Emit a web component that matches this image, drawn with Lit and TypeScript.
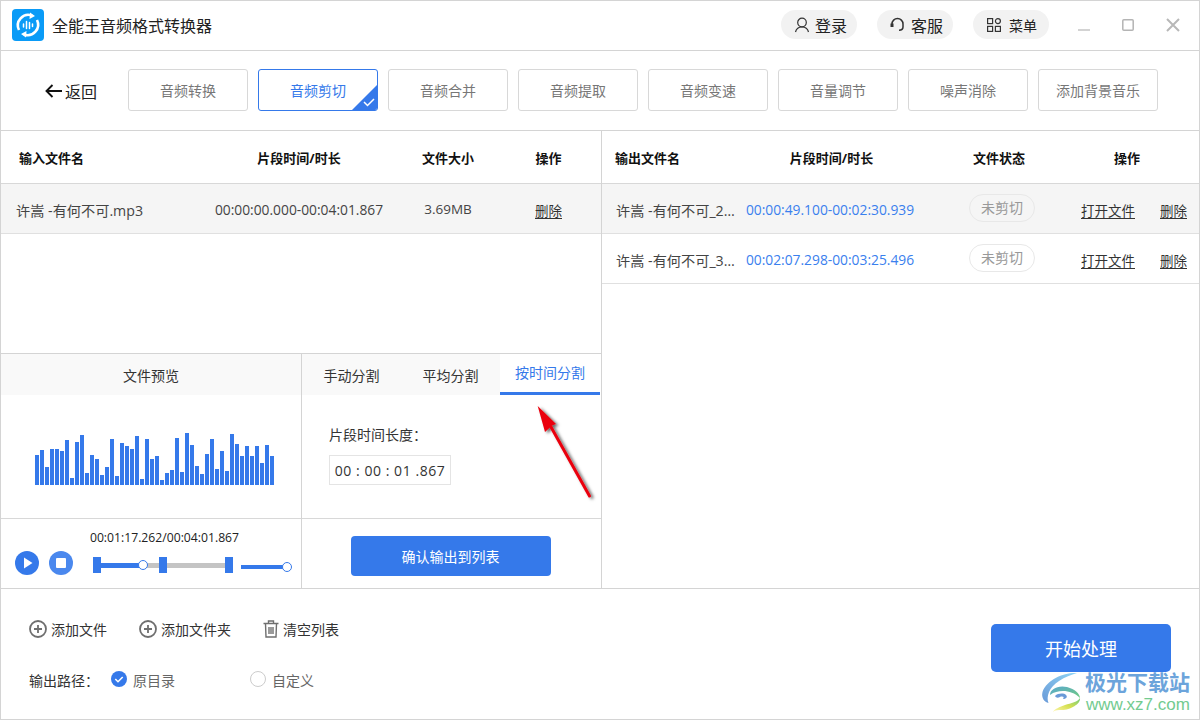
import { LitElement, html, css } from "lit";
import { customElement } from "lit/decorators.js";

const TOPS = [315,300,351,297,297,303,270,384,276,255,369,315,327,375,351,267,378,279,288,297,258,387,267,327,318,390,369,360,264,366,249,285,348,372,312,267,357,303,363,252,282,318,288,318,288,339,285,318];
const TABS = ["音频转换","音频剪切","音频合并","音频提取","音频变速","音量调节","噪声消除","添加背景音乐"];

const plus = html`<svg class="ic" width="18" height="18" viewBox="0 0 18 18" fill="none" stroke="#6f6f6f" stroke-width="1.8"><circle cx="9" cy="9" r="8"/><path d="M5 9h8M9 5v8"/></svg>`;

@customElement("app-root")
export class AppRoot extends LitElement {
  static styles = css`
    :host { display: block; width: 1200px; height: 720px; font-family: "Open Sans", "Noto Sans CJK SC", sans-serif; color: #333; font-size: 14px; }
    * { box-sizing: border-box; }
    .app { position: relative; width: 1200px; height: 720px; border: 1px solid #d4d4d4; background: #fff; display: flex; flex-direction: column; overflow: hidden; }
    .titlebar { height: 50px; flex: none; border-bottom: 1px solid #d4d4d4; display: flex; align-items: center; padding: 0 19px 2px 11px; }
    .logo { width: 32px; height: 32px; flex: none; }
    .title { margin-left: 8px; font-size: 16px; color: #222; flex: 1; }
    .pill { width: 76px; height: 29px; border-radius: 15px; background: #f2f2f2; display: flex; align-items: center; padding-left: 13px; gap: 5px; margin-right: 20px; color: #222; font-size: 16px; }
    .pill.service { gap: 6px; }
    .pill.small { font-size: 14px; gap: 8px; padding-left: 14px; }
    .winctl { display: flex; align-items: center; gap: 32px; margin-left: 9px; }
    .toolbar { height: 80px; flex: none; border-bottom: 1px solid #d4d4d4; display: flex; align-items: center; padding: 0 0 2px 44px; }
    .back { width: 83px; display: flex; align-items: center; gap: 3px; font-size: 16px; color: #222; margin-top: 2px; }
    .tabs-top { display: flex; gap: 10px; }
    .tb { position: relative; width: 120px; height: 42px; border: 1px solid #d8d8d8; border-radius: 3px; display: flex; align-items: center; justify-content: center; color: #777; font-size: 14px; overflow: hidden; }
    .tb.on { border-color: #3579ea; color: #3579ea; }
    .corner { position: absolute; right: 0; bottom: 0; }
    .main { height: 458px; flex: none; border-bottom: 1px solid #d4d4d4; display: flex; }
    .left { width: 601px; flex: none; border-right: 1px solid #d4d4d4; display: flex; flex-direction: column; }
    .right { flex: 1; }
    .upper { height: 223px; flex: none; border-bottom: 1px solid #d4d4d4; }
    .hd { height: 53px; border-bottom: 1px solid #d8d8d8; font-weight: 700; font-size: 13px; color: #111; align-items: center; }
    .row { height: 50px; padding-top: 1px; border-bottom: 1px solid #e0e0e0; align-items: center; font-size: 13.8px; color: #444; }
    .row.rg { padding-top: 2px; }
    .row.sel { background: #f5f5f5; }
    .lg { display: grid; grid-template-columns: 197px 202px 96px 105px; }
    .rg { display: grid; grid-template-columns: 139px 178px 159px 121px; }
    .c { text-align: center; }
    .size { font-size: 13.5px; }
    .lop { padding-top: 1px; }
    .hd .n { padding-left: 18px; }
    .row .n { padding-left: 15px; font-size: 14.2px; margin-top: 1px; }
    .rg .hd-n { padding-left: 13px; }
    .rg .hd-t { padding-left: 3px; }
    .rg .hd-s { padding-left: 1px; }
    .rg .n { padding-left: 14px; width: 135px; white-space: nowrap; overflow: hidden; text-overflow: ellipsis; }
    .blue { color: #3a80ee; }
    u { color: #333; text-underline-offset: 2px; font-size: 13.5px; }
    .state { display: inline-block; width: 66px; height: 28px; line-height: 26px; margin: -4px 0 0 7px; border: 1px solid #e8e8e8; border-radius: 14px; background: #fff; color: #999; font-size: 14px; text-align: center; }
    .sel .state { background: #f5f5f5; }
    .ops { display: flex; gap: 25px; padding-left: 3px; }
    .op-h { width: 98px; text-align: center; }
    .lower { flex: 1; display: flex; min-height: 0; }
    .pv { width: 301px; flex: none; border-right: 1px solid #d4d4d4; display: flex; flex-direction: column; }
    .split { flex: 1; display: flex; flex-direction: column; }
    .pv-h { height: 41px; flex: none; background: #f9f9f9; display: flex; align-items: center; justify-content: center; font-size: 14px; color: #333; }
    .wave-wrap { height: 124px; flex: none; border-bottom: 1px solid #d8d8d8; padding: 0 0 33px 34px; display: flex; align-items: flex-end; }
    .wave { display: flex; gap: 1px; align-items: flex-end; }
    .bar { width: 4px; background: #3579ea; }
    .player { flex: 1; padding: 11px 0 0 14px; position: relative; }
    .time { font-size: 12.2px; color: #222; text-align: center; width: 285px; line-height: 16px; padding-left: 14px; height: 16px; margin-bottom: 5px; }
    .controls { display: flex; align-items: center; gap: 10px; margin-top: 3px; }
    .sl { display: flex; align-items: center; margin: 3px 0 0 10px; }
    .track { position: relative; width: 140px; height: 16px; }
    .grey { position: absolute; left: 50px; right: 8px; top: 6px; height: 5px; background: #c4c4c4; }
    .fill { position: absolute; left: 8px; width: 42px; top: 6px; height: 5px; background: #3579ea; }
    .h { position: absolute; width: 8px; height: 16px; top: 0; background: #3579ea; }
    .dot { position: absolute; width: 10px; height: 10px; border-radius: 50%; background: #fff; border: 1px solid #3579ea; }
    .vol { position: relative; width: 46px; height: 4px; background: #3579ea; margin-left: 8px; margin-top: 4px; }
    .stabs { height: 41px; flex: none; display: grid; grid-template-columns: 99px 99px 100px; background: #f9f9f9; font-size: 14px; width: 298px; }
    .stabs div { display: flex; align-items: center; justify-content: center; color: #333; }
    .stabs .on { background: #fff; color: #3579ea; border-bottom: 3px solid #3579ea; padding: 0 0 2px; }
    .split-body { height: 124px; flex: none; border-bottom: 1px solid #d8d8d8; padding: 30px 0 0 27px; }
    .lbl { font-size: 14px; color: #333; line-height: 20px; }
    .tbox { margin-top: 10px; width: 122px; height: 30px; border: 1px solid #e4e4e4; display: flex; align-items: center; justify-content: center; font-size: 14px; color: #333; letter-spacing: 0.55px; white-space: pre; }
    .split-foot { flex: 1; display: flex; justify-content: center; padding: 17px 2px 0 0; }
    .confirm { width: 200px; height: 40px; border-radius: 4px; background: #3579ea; color: #fff; font-size: 14px; display: flex; align-items: center; justify-content: center; }
    .bottom { flex: 1; display: flex; position: relative; }
    .b-left { flex: 1; padding: 30px 0 0 28px; }
    .acts { display: flex; align-items: center; height: 20px; font-size: 14px; color: #333; }
    .act { display: flex; align-items: center; gap: 4px; }
    .act + .act { margin-left: 32px; }
    .path { display: flex; align-items: center; height: 20px; margin-top: 31px; font-size: 14px; color: #333; }
    .radio { display: flex; align-items: center; gap: 6px; color: #666; font-size: 14px; }
    .circle { width: 16px; height: 16px; border-radius: 50%; border: 1px solid #ccc; margin-top: -2px; }
    .start { width: 180px; height: 48px; border-radius: 5px; background: #3579ea; color: #fff; font-size: 18px; display: flex; align-items: center; justify-content: center; margin: 35px 28px 0 0; }
    .arrow { position: absolute; left: 530px; top: 398px; }
    .wm { position: absolute; left: 1040px; top: 670px; width: 152px; height: 44px; }
    .wm-a { position: absolute; left: 44px; top: -2px; font-size: 21px; line-height: 26px; font-weight: 700; color: #6ca4db; white-space: nowrap; }
    .wm-b { position: absolute; left: 45px; top: 24px; font-size: 17px; line-height: 20px; color: #73cb90; white-space: nowrap; font-family: "Liberation Sans", sans-serif; }
  `;

  render() {
    return html`<div class="app">
      <div class="titlebar">
        <svg class="logo" viewBox="0 0 32 32">
          <rect width="32" height="32" rx="4" fill="#0a9bf7"/>
          <path d="M7 21 A10.500 10.500 0 0 1 20 6.500" fill="none" stroke="#fff" stroke-width="2.600"/>
          <path d="M25 11 A10.500 10.500 0 0 1 12 25.500" fill="none" stroke="#fff" stroke-width="2.600"/>
          <path d="M18 3.500l5 3.500-5.500 3zM14 28.500l-5-3.500 5.500-3z" fill="#fff"/>
          <path d="M11.500 15v3M14.500 12.500v7M17.500 13.500v6M20.500 15v2.500" stroke="#fff" stroke-width="1.500" stroke-linecap="round"/>
        </svg>
        <div class="title">全能王音频格式转换器</div>
        <div class="pill"><svg width="16" height="16" viewBox="0 0 16 16" fill="none" stroke="#333" stroke-width="1.200"><circle cx="8" cy="5.500" r="4.300"/><path d="M1.500 15c.8-3.200 3.200-5 6.500-5s5.700 1.800 6.500 5"/></svg>登录</div>
        <div class="pill service"><svg width="15" height="16" viewBox="0 0 15 16" fill="none" stroke="#333" stroke-width="1.500"><path d="M2 9V7a5.500 5.500 0 0 1 11 0v3c0 2-1.500 3.200-4 3.200"/><path d="M2 6.500v3.500" stroke-width="3"/></svg>客服</div>
        <div class="pill small"><svg width="14" height="14" viewBox="0 0 14 14" fill="none" stroke="#333" stroke-width="1.200"><rect x=".6" y=".6" width="5" height="5"/><rect x=".6" y="8.400" width="5" height="5"/><rect x="8.400" y="8.400" width="5" height="5"/><circle cx="10.900" cy="3.100" r="2.500"/></svg>菜单</div>
        <div class="winctl">
          <svg width="12" height="12" viewBox="0 0 12 12"><path d="M0 11h12" stroke="#c4c4c4" stroke-width="1.500"/></svg>
          <svg width="12" height="12" viewBox="0 0 12 12" fill="none"><rect x=".8" y=".8" width="10.400" height="10.400" rx="1" stroke="#b4b4b4" stroke-width="1.500"/></svg>
          <svg width="14" height="14" viewBox="0 0 14 14"><path d="M1 1l12 12M13 1L1 13" stroke="#b8b8b8" stroke-width="2"/></svg>
        </div>
      </div>

      <div class="toolbar">
        <div class="back"><svg width="17" height="14" viewBox="0 0 17 14" fill="none" stroke="#111" stroke-width="1.900"><path d="M17 7H1.500M7.500 1l-6 6 6 6"/></svg>返回</div>
        <div class="tabs-top">
          ${TABS.map((t, i) => html`<div class="tb ${i === 1 ? "on" : ""}">${t}${i === 1 ? html`<svg class="corner" width="25" height="25" viewBox="0 0 25 25"><path d="M25 0v25H0z" fill="#3579ea"/><path d="M12 17l3.500 3.500L22 14" fill="none" stroke="#fff" stroke-width="1.500"/></svg>` : ""}</div>`)}
        </div>
      </div>

      <div class="main">
        <div class="left">
          <div class="upper">
            <div class="hd lg"><div class="n">输入文件名</div><div class="c">片段时间/时长</div><div class="c">文件大小</div><div class="c">操作</div></div>
            <div class="row sel lg"><div class="n">许嵩 -有何不可.mp3</div><div class="c">00:00:00.000-00:04:01.867</div><div class="c size">3.69MB</div><div class="c lop"><u>删除</u></div></div>
          </div>
          <div class="lower">
            <div class="pv">
              <div class="pv-h">文件预览</div>
              <div class="wave-wrap"><div class="wave">${TOPS.map((t) => html`<div class="bar" style="height:${(405 - t) / 3}px"></div>`)}</div></div>
              <div class="player">
                <div class="time">00:01:17.262/00:04:01.867</div>
                <div class="controls">
                  <svg width="24" height="24" viewBox="0 0 24 24"><circle cx="12" cy="12" r="12" fill="#3579ea"/><path d="M9 6.500v11l8.500-5.500z" fill="#fff"/></svg>
                  <svg width="24" height="24" viewBox="0 0 24 24"><circle cx="12" cy="12" r="12" fill="#4a88ee"/><rect x="7" y="7" width="10" height="10" rx="1" fill="#fff"/></svg>
                  <div class="sl">
                    <div class="track">
                      <div class="grey"></div><div class="fill"></div>
                      <div class="h" style="left:0"></div><div class="h" style="left:66px"></div><div class="h" style="left:132px"></div>
                      <div class="dot" style="left:45px;top:3px"></div>
                    </div>
                    <div class="vol"><div class="dot" style="right:-5px;top:-3px"></div></div>
                  </div>
                </div>
              </div>
            </div>
            <div class="split">
              <div class="stabs"><div>手动分割</div><div>平均分割</div><div class="on">按时间分割</div></div>
              <div class="split-body">
                <div class="lbl">片段时间长度：</div>
                <div class="tbox">00 : 00 : 01 .867</div>
              </div>
              <div class="split-foot"><div class="confirm">确认输出到列表</div></div>
            </div>
          </div>
        </div>
        <div class="right">
          <div class="hd rg"><div class="hd-n">输出文件名</div><div class="c hd-t">片段时间/时长</div><div class="c hd-s">文件状态</div><div class="op-h">操作</div></div>
          ${[["许嵩 -有何不可_2.mp3","00:00:49.100-00:02:30.939",true],["许嵩 -有何不可_3.mp3","00:02:07.298-00:03:25.496",false]].map(([n,t,s]) => html`
            <div class="row rg ${s ? "sel" : ""}"><div class="n">${n}</div><div class="c blue">${t}</div><div class="c"><span class="state">未剪切</span></div><div class="ops"><u>打开文件</u><u>删除</u></div></div>`)}
        </div>
      </div>

      <div class="bottom">
        <div class="b-left">
          <div class="acts">
            <div class="act">${plus}添加文件</div>
            <div class="act">${plus}添加文件夹</div>
            <div class="act"><svg width="16" height="18" viewBox="0 0 16 18" fill="none" stroke="#6f6f6f" stroke-width="1.400"><path d="M.5 3.500h15M5.500 3.500V1h5v2.500M2.500 3.500l.5 13.500h10l.5-13.500M6 7v7M8 7v7M10 7v7"/></svg>清空列表</div>
          </div>
          <div class="path">
            <span style="width:82px">输出路径：</span>
            <div class="radio" style="width:139px"><svg width="16" height="16" viewBox="0 0 16 16" style="margin-top:-2px"><circle cx="8" cy="8" r="8" fill="#3579ea"/><path d="M4.300 8l2.700 2.700 4.700-4.700" fill="none" stroke="#fff" stroke-width="1.600"/></svg>原目录</div>
            <div class="radio"><div class="circle"></div>自定义</div>
          </div>
        </div>
        <div class="start">开始处理</div>
      </div>

      <svg class="arrow" width="72" height="110" viewBox="0 0 72 110" fill="none">
        <defs><filter id="sh" x="-30%" y="-30%" width="170%" height="170%"><feDropShadow dx="2.500" dy="1.500" stdDeviation="1.800" flood-color="#000" flood-opacity=".6"/></filter></defs>
        <g filter="url(#sh)">
          <path d="M58.500 97L20 28" stroke="#ea060f" stroke-width="3" stroke-linecap="round"/>
          <path d="M6.700 7L25 25l-4 1.500L14 33z" fill="#ea060f"/>
        </g>
      </svg>

      <div class="wm">
        <svg width="44" height="44" viewBox="0 0 44 44" style="position:absolute;left:0;top:0">
          <defs>
            <linearGradient id="g1" x1="0" y1="1" x2="1" y2="0"><stop offset="0" stop-color="#6a9ad8"/><stop offset="1" stop-color="#8fd4f4"/></linearGradient>
            <linearGradient id="g2" x1="0" y1="0" x2="1" y2="1"><stop offset="0" stop-color="#5aa8d0"/><stop offset="1" stop-color="#6fcb7e"/></linearGradient>
            <linearGradient id="g3" x1="0" y1="1" x2="1" y2="0"><stop offset="0" stop-color="#fff6b0"/><stop offset=".5" stop-color="#d6e050"/><stop offset="1" stop-color="#6fcb7e"/></linearGradient>
          </defs>
          <path d="M36 2C24 1 6 8 1.500 21c-1.500 6 2 10 6 11C5 26 8 16 18 10 24 6 30 4 36 2z" fill="url(#g1)"/>
          <path d="M9 24c0-6 8-10 17-8 8 2 13 7 13 11-5-5-11-7-17-7-5 0-9 1-13 4z" fill="url(#g2)"/>
          <path d="M14 25c3-3 9-3 11-1 2 2 0 4-3 4 2-2-1-3-3-2-2 1-4 1-5-1z" fill="#6a9ad8"/>
          <path d="M39 27c1 6-10 12-18 12-4 0-7 0-9 2 1-3 7-5 12-7 6-2 13-3 15-7z" fill="url(#g3)"/>
        </svg>
        <div class="wm-a">极光下载站</div>
        <div class="wm-b">www.xz7.com</div>
      </div>
    </div>`;
  }
}
